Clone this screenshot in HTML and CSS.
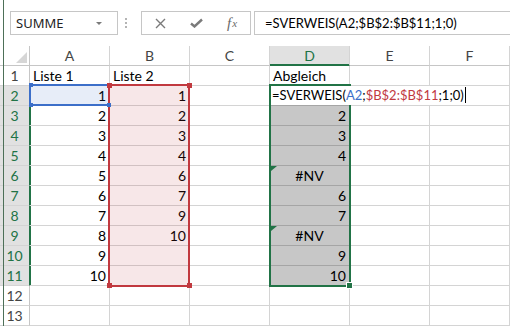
FILE: index.html
```html
<!DOCTYPE html>
<html>
    <head>
        <meta charset="utf-8">
        <title>SVERWEIS Abgleich</title>
        <link rel="stylesheet" href="styles.css">
    </head>
    <body>
        <div class="edge"></div>
        <div class="toolbar">
            <div class="namebox"><span>SUMME</span><span class="arrow"></span></div>
            <div class="grip"><i></i><i></i><i></i></div>
            <div class="buttons">
                <span class="btn">
                    <svg width="11" height="11" viewBox="0 0 11 11"><path d="M1 1L10 10M10 1L1 10" stroke="#7a7a7a" stroke-width="1.4" fill="none"/></svg>
                </span>
                <span class="btn">
                    <svg width="13" height="10" viewBox="0 0 13 10"><path d="M1 5.5L4.5 8.5L12 1.5" stroke="#7a7a7a" stroke-width="2.4" fill="none"/></svg>
                </span>
                <span class="btn fx">f<small>x</small></span>
            </div>
            <div class="formula">=SVERWEIS(A2;$B$2:$B$11;1;0)</div>
        </div>

        <div class="sheet">
            <div class="grid">
                <div class="corner"><span></span></div>
                <div class="ch">A</div><div class="ch">B</div><div class="ch">C</div>
                <div class="ch sel">D</div><div class="ch">E</div><div class="ch">F</div>

                <div class="rh">1</div>
                <div>Liste 1</div><div>Liste 2</div><div></div><div>Abgleich</div><div></div><div></div>

                <div class="rh sel">2</div>
                <div class="num">1</div><div class="num">1</div><div></div><div></div><div></div><div></div>

                <div class="rh sel">3</div>
                <div class="num">2</div><div class="num">2</div><div></div><div class="num">2</div><div></div><div></div>

                <div class="rh sel">4</div>
                <div class="num">3</div><div class="num">3</div><div></div><div class="num">3</div><div></div><div></div>

                <div class="rh sel">5</div>
                <div class="num">4</div><div class="num">4</div><div></div><div class="num">4</div><div></div><div></div>

                <div class="rh sel">6</div>
                <div class="num">5</div><div class="num">6</div><div></div><div class="err">#NV</div><div></div><div></div>

                <div class="rh sel">7</div>
                <div class="num">6</div><div class="num">7</div><div></div><div class="num">6</div><div></div><div></div>

                <div class="rh sel">8</div>
                <div class="num">7</div><div class="num">9</div><div></div><div class="num">7</div><div></div><div></div>

                <div class="rh sel">9</div>
                <div class="num">8</div><div class="num">10</div><div></div><div class="err">#NV</div><div></div><div></div>

                <div class="rh sel">10</div>
                <div class="num">9</div><div></div><div></div><div class="num">9</div><div></div><div></div>

                <div class="rh sel">11</div>
                <div class="num">10</div><div></div><div></div><div class="num">10</div><div></div><div></div>

                <div class="rh">12</div>
                <div></div><div></div><div></div><div></div><div></div><div></div>

                <div class="rh">13</div>
                <div></div><div></div><div></div><div></div><div></div><div></div>
            </div>

            <!-- formula references and selection, drawn over the grid -->
            <div class="ref ref-blue"></div>
            <div class="ref ref-red"></div>
            <div class="sel-fill"></div>
            <div class="sel-box"></div>

            <div class="handle blue" style="left: 29px; top: 37px;"></div>
            <div class="handle blue" style="left: 29px; top: 57px;"></div>
            <div class="handle red" style="left: 107px; top: 37px;"></div>
            <div class="handle red" style="left: 187px; top: 37px;"></div>
            <div class="handle red" style="left: 107px; top: 237px;"></div>
            <div class="handle red" style="left: 187px; top: 237px;"></div>
            <div class="handle blue" style="left: 107px; top: 57px;"></div>
            <div class="handle green"></div>

            <div class="tri" style="top: 120px;"></div>
            <div class="tri" style="top: 180px;"></div>

            <div class="editor">=SVERWEIS(<span class="c-blue">A2</span>;<span class="c-red">$B$2:$B$11</span>;1;0)<span class="caret"></span></div>
        </div>
    </body>
</html>
```

FILE: styles.css
```css
* {
    box-sizing: border-box;
}

html {
    font-family: Lato, "Liberation Sans", sans-serif;
    font-size: 14px;
}

body {
    margin: 0;
    width: 510px;
    height: 326px;
    overflow: hidden;
    position: relative;
    background: #fff;
    color: #000;
}

.edge {
    position: absolute;
    left: 3px;
    top: 0;
    bottom: 0;
    width: 1px;
    background: #4d7058;
    z-index: 5;
}

/* formula bar */

.toolbar {
    height: 46px;
    display: flex;
    align-items: flex-start;
    padding: 11px 0 0 10px;
}

.namebox {
    width: 108px;
    height: 24px;
    border: 1px solid #c6c6c6;
    display: flex;
    align-items: center;
    justify-content: space-between;
    padding: 0 15px 0 5px;
    font: 13px "Noto Sans", sans-serif;
    color: #222;
}

.arrow {
    border-left: 3px solid transparent;
    border-right: 3px solid transparent;
    border-top: 3px solid #7a7a7a;
}

.grip {
    width: 23px;
    height: 24px;
    padding-left: 7px;
    display: flex;
    flex-direction: column;
    justify-content: center;
    gap: 2px;
}

.grip i {
    width: 2px;
    height: 2px;
    background: #b4b4b4;
}

.buttons {
    width: 110px;
    height: 24px;
    border: 1px solid #c6c6c6;
    display: flex;
}

.btn {
    width: 36px;
    display: flex;
    align-items: center;
    justify-content: center;
}

.fx {
    font: italic 15px "Liberation Serif", serif;
    color: #6a6a6a;
}

.fx small {
    font-size: 11px;
    margin-left: 1px;
}

.formula {
    flex: 1;
    height: 24px;
    margin-left: 3px;
    border: 1px solid #c6c6c6;
    border-right: 0;
    padding-left: 10px;
    font-size: 13px;
    line-height: 22px;
}

/* sheet */

.sheet {
    position: relative;
}

.grid {
    display: grid;
    grid-template-columns: 30px repeat(6, 80px);
    grid-auto-rows: 20px;
}

.grid > div {
    border-right: 1px solid #d4d4d4;
    border-bottom: 1px solid #d4d4d4;
    padding: 0 3px;
    line-height: 19px;
    white-space: nowrap;
}

.grid > .corner {
    display: flex;
    justify-content: flex-end;
    align-items: flex-end;
    padding: 0 2px 2px 0;
    border-color: #c6c6c6;
}

.corner span {
    border-left: 11px solid transparent;
    border-bottom: 11px solid #d6d6d6;
}

.grid > .ch {
    text-align: center;
    color: #444;
    border-bottom-color: #c6c6c6;
}

.grid > .rh {
    padding: 0;
    text-align: center;
    color: #444;
    border-right-color: #c6c6c6;
}

.grid > .sel {
    background: #e1e1e1;
    color: #217346;
}

.grid > .ch.sel {
    border-bottom-color: #217346;
    box-shadow: inset 0 -1px 0 #217346;
}

.grid > .rh.sel {
    border-right-color: #217346;
    box-shadow: 1px 0 0 #217346;
}

.num {
    text-align: right;
}

.err {
    text-align: center;
}

.ref,
.sel-box,
.sel-fill,
.handle,
.tri,
.editor {
    position: absolute;
}

.ref-blue {
    left: 29px;
    top: 38px;
    width: 81px;
    height: 22px;
    border: 2px solid #3c6fc9;
    background: rgba(60, 111, 201, 0.12);
}

.ref-red {
    left: 108px;
    top: 38px;
    width: 82px;
    height: 203px;
    border: 2px solid #c1393f;
    background: rgba(193, 57, 63, 0.12);
}

.sel-fill {
    left: 271px;
    top: 59px;
    width: 78px;
    height: 180px;
    background: rgba(0, 0, 0, 0.22);
}

.sel-box {
    left: 269px;
    top: 38px;
    width: 82px;
    height: 203px;
    border: 2px solid #217346;
}

.handle {
    width: 5px;
    height: 5px;
}

.handle.blue {
    background: #3c6fc9;
    width: 4px;
    height: 4px;
}

.handle.red {
    background: #c1393f;
}

.handle.green {
    left: 346px;
    top: 236px;
    width: 7px;
    height: 7px;
    background: #217346;
    border: 1px solid #fff;
}

.tri {
    left: 271px;
    width: 0;
    height: 0;
    border-top: 5px solid #217346;
    border-right: 6px solid transparent;
}

.editor {
    left: 271px;
    top: 40px;
    width: 195px;
    height: 19px;
    background: #fff;
    padding-left: 1px;
    font-size: 13px;
    line-height: 19px;
    white-space: nowrap;
}

.c-blue {
    color: #3c6fc9;
}

.c-red {
    color: #c1393f;
}

.caret {
    display: inline-block;
    width: 1px;
    height: 16px;
    margin-left: 1px;
    background: #000;
    vertical-align: -3px;
}
```
